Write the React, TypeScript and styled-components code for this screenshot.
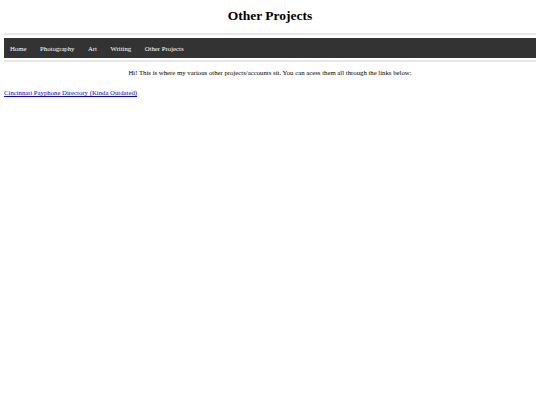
import styled, { createGlobalStyle } from 'styled-components';

const GlobalStyle = createGlobalStyle`
    body {
        margin: 4px;
        background: #ffffff;
        font-family: "Liberation Serif", "Times New Roman", serif;
        font-size: 6.75px;
        color: #000000;
    }
`;

const Title = styled.h1`
    margin: 4px 0 9px;
    text-align: center;
    font-size: 13.5px;
    line-height: 16px;
    font-weight: bold;
`;

const Rule = styled.hr`
    margin: 0 -1px;
    border: none;
    height: 2px;
    background-color: #e6e6e6;
`;

const NavBar = styled.nav`
    display: flex;
    align-items: center;
    gap: 13.5px;
    height: 20px;
    margin: 3px -1px 2px;
    padding: 0 7px;
    background-color: #333333;
    border-right: 1px solid #8a8a8a;
`;

const NavLink = styled.a`
    color: #ffffff;
    text-decoration: none;
    font-size: 6.75px;
`;

const Intro = styled.p`
    margin: 7px 0;
    text-align: center;
    line-height: 8px;
`;

const ProjectLink = styled.a`
    display: inline-block;
    margin-top: 5px;
    line-height: 8px;
    color: #0000ee;
    text-decoration: underline;
`;

export default function App() {
    return (
        <>
            <GlobalStyle />
            <Title>Other Projects</Title>
            <Rule />
            <NavBar>
                <NavLink href="#">Home</NavLink>
                <NavLink href="#">Photography</NavLink>
                <NavLink href="#">Art</NavLink>
                <NavLink href="#">Writing</NavLink>
                <NavLink href="#">Other Projects</NavLink>
            </NavBar>
            <Rule />
            <Intro>
                Hi! This is where my various other projects/accounts sit. You can acess them all through the links below:
            </Intro>
            <ProjectLink href="#">Cincinnati Payphone Directory (Kinda Outdated)</ProjectLink>
        </>
    );
}
